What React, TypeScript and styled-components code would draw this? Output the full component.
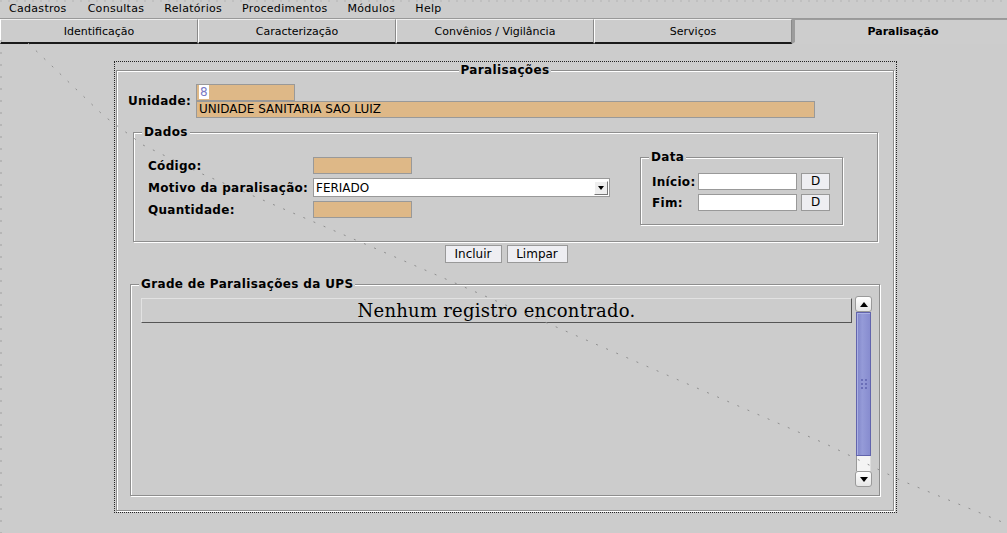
import React from "react";
import styled, { createGlobalStyle } from "styled-components";

const GlobalStyle = createGlobalStyle`
  body {
    margin: 0;
    background: #cccccc;
    font-family: "DejaVu Sans", "Liberation Sans", sans-serif;
    color: #000;
  }
  #root {
    position: relative;
    width: 1007px;
    height: 533px;
    overflow: hidden;
  }
`;

const menus = ["Cadastros", "Consultas", "Relatórios", "Procedimentos", "Módulos", "Help"];
const tabs = ["Identificação", "Caracterização", "Convênios / Vigilância", "Serviços", "Paralisação"];

const App = () => {
  return (
    <>
      <GlobalStyle />
      <MenuBar>
        {menus.map((m) => (
          <MenuItem key={m}>{m}</MenuItem>
        ))}
      </MenuBar>

      <TabBar>
        {tabs.map((t, i) => (
          <Tab key={t} $active={i === tabs.length - 1}>
            {t}
          </Tab>
        ))}
      </TabBar>

      <Panel>
        <Group>
          <Legend $center>Paralisações</Legend>
          <OuterBody>
            <UnidadeRow>
              <Label>Unidade:</Label>
              <FieldStack>
                <Field $w={99}>
                  <Selected>8</Selected>
                </Field>
                <Field $w={619}>UNIDADE SANITARIA SAO LUIZ</Field>
              </FieldStack>
            </UnidadeRow>

            <DadosGroup>
              <Legend>Dados</Legend>
              <DadosBody>
                <FormGrid>
                  <Label>Código:</Label>
                  <Field $w={99} />
                  <Label>Motivo da paralisação:</Label>
                  <Select>
                    <span>FERIADO</span>
                    <ArrowBox>
                      <Triangle />
                    </ArrowBox>
                  </Select>
                  <Label>Quantidade:</Label>
                  <Field $w={99} />
                </FormGrid>

                <DataGroup>
                  <Legend>Data</Legend>
                  <DataBody>
                    <Label>Início:</Label>
                    <Field $w={99} $white />
                    <SmallButton>D</SmallButton>
                    <Label>Fim:</Label>
                    <Field $w={99} $white />
                    <SmallButton>D</SmallButton>
                  </DataBody>
                </DataGroup>
              </DadosBody>
            </DadosGroup>

            <ButtonRow>
              <Button $w={57}>Incluir</Button>
              <Button $w={61}>Limpar</Button>
            </ButtonRow>

            <GradeGroup>
              <Legend>Grade de Paralisações da UPS</Legend>
              <GradeBody>
                <TableArea>
                  <EmptyHeader>Nenhum registro encontrado.</EmptyHeader>
                </TableArea>
                <ScrollBar>
                  <ScrollButton>
                    <Arrow viewBox="0 0 8 5">
                      <path d="M0 5 L4 0 L8 5 Z" />
                    </Arrow>
                  </ScrollButton>
                  <Thumb>
                    <Grip />
                  </Thumb>
                  <Track />
                  <ScrollButton>
                    <Arrow viewBox="0 0 8 5">
                      <path d="M0 0 L8 0 L4 5 Z" />
                    </Arrow>
                  </ScrollButton>
                </ScrollBar>
              </GradeBody>
            </GradeGroup>
          </OuterBody>
        </Group>
      </Panel>

      <Trail width="1007" height="533" viewBox="0 0 1007 533">
        <polyline
          points="28,43 104,116 143,145 200,173 372,247 600,346 826,444 900,480 1007,524"
          fill="none"
          stroke="#8f8f8f"
          strokeWidth="1"
          strokeDasharray="2 9"
        />
        <line x1="1" y1="40" x2="1" y2="533" stroke="#a0a0a0" strokeDasharray="2 10" />
        <line x1="0" y1="1" x2="1007" y2="1" stroke="#b4b4b4" strokeDasharray="2 6" />
      </Trail>
    </>
  );
};

export default App;

const MenuBar = styled.div`
  display: flex;
  height: 18px;
  border-bottom: 1px solid #999;
  font-size: 11px;
  line-height: 18px;
  letter-spacing: 0.3px;
`;

const MenuItem = styled.div`
  padding: 0 10px;
  &:first-child {
    padding-left: 9px;
    padding-right: 11px;
  }
`;

const TabBar = styled.div`
  display: grid;
  grid-template-columns: repeat(4, 198px) 1fr;
  height: 25px;
`;

const Tab = styled.div<{ $active?: boolean }>`
  box-sizing: border-box;
  display: flex;
  align-items: center;
  justify-content: center;
  font-size: 11px;
  font-weight: ${(p) => (p.$active ? "bold" : "normal")};
  background: ${(p) => (p.$active ? "#cdcdcd" : "#cccccc")};
  border-left: ${(p) => (p.$active ? "3px solid #9c9c9c" : "1px solid #fff")};
  border-right: ${(p) => (p.$active ? "none" : "1px solid #8a8a8a")};
  border-top: ${(p) => (p.$active ? "1px solid #9c9c9c" : "1px solid #eee")};
  border-bottom: ${(p) => (p.$active ? "2px solid transparent" : "2px solid #1a1a1a")};
  padding-left: ${(p) => (p.$active ? "4px" : "0")};
`;

const Panel = styled.div`
  box-sizing: border-box;
  width: 783px;
  height: 452px;
  margin: 17px 0 0 114px;
  border: 1px dotted #222;
  padding: 1px 2px 1px 1px;
`;

const Group = styled.fieldset`
  margin: 0;
  padding: 0;
  min-width: 0;
  border: 1px solid #8e8e8e;
  box-shadow: 1px 1px 0 #fff, inset 1px 1px 0 #fff;
`;

const Legend = styled.legend<{ $center?: boolean }>`
  font-size: 12px;
  font-weight: bold;
  line-height: 14px;
  letter-spacing: 0.35px;
  padding: 0 2px;
  background: #cccccc;
  margin-left: ${(p) => (p.$center ? "auto" : "8px")};
  margin-right: ${(p) => (p.$center ? "auto" : "0")};
`;

const OuterBody = styled.div`
  padding: 7px 15px 14px 11px;
`;

const UnidadeRow = styled.div`
  display: flex;
  align-items: center;
`;

const Label = styled.div`
  font-size: 12px;
  font-weight: bold;
  letter-spacing: 0.3px;
  white-space: nowrap;
`;

const FieldStack = styled.div`
  display: flex;
  flex-direction: column;
  margin-left: 5px;
`;

const Field = styled.div<{ $w: number; $white?: boolean }>`
  box-sizing: border-box;
  width: ${(p) => p.$w}px;
  height: 17px;
  background: ${(p) => (p.$white ? "#ffffff" : "#deb887")};
  border: 1px solid #999;
  font-size: 12px;
  line-height: 15px;
  padding-left: 2px;
  white-space: nowrap;
  overflow: hidden;
`;

const Selected = styled.span`
  background: #fff;
  color: #7878c4;
  padding: 0 1px;
`;

const DadosGroup = styled(Group)`
  margin: 7px 0 0 5px;
`;

const DadosBody = styled.div`
  display: flex;
  justify-content: space-between;
  align-items: flex-start;
  padding: 11px 34px 16px 14px;
`;

const FormGrid = styled.div`
  display: grid;
  grid-template-columns: 165px auto;
  row-gap: 4px;
  align-items: center;
  margin-top: 7px;
`;

const Select = styled.div`
  box-sizing: border-box;
  width: 297px;
  height: 19px;
  background: #fff;
  border: 1px solid #999;
  display: flex;
  align-items: center;
  justify-content: space-between;
  font-size: 12px;
  padding: 0 1px 0 2px;
`;

const ArrowBox = styled.div`
  box-sizing: border-box;
  width: 14px;
  height: 14px;
  background: #eeeeee;
  border: 1px solid #fff;
  border-right-color: #777;
  border-bottom-color: #777;
  display: flex;
  align-items: center;
  justify-content: center;
`;

const Triangle = styled.div`
  width: 0;
  height: 0;
  border-left: 3px solid transparent;
  border-right: 3px solid transparent;
  border-top: 4px solid #000;
`;

const DataGroup = styled(Group)`
  width: 203px;
  box-sizing: border-box;
`;

const DataBody = styled.div`
  display: grid;
  grid-template-columns: 42px 99px 29px;
  column-gap: 4px;
  row-gap: 4px;
  align-items: center;
  padding: 9px 12px 13px 11px;
`;

const SmallButton = styled.div`
  box-sizing: border-box;
  height: 17px;
  background: #eeeef2;
  border: 1px solid #999;
  font-size: 12px;
  line-height: 15px;
  text-align: center;
`;

const ButtonRow = styled.div`
  display: flex;
  justify-content: center;
  gap: 5px;
  margin: 3px 0 0 6px;
`;

const Button = styled.div<{ $w: number }>`
  box-sizing: border-box;
  width: ${(p) => p.$w}px;
  height: 18px;
  background: #eeeef2;
  border: 1px solid #999;
  font-size: 12px;
  line-height: 16px;
  text-align: center;
`;

const GradeGroup = styled(Group)`
  margin: 14px -2px 0 2px;
`;

const GradeBody = styled.div`
  display: flex;
  gap: 3px;
  padding: 5px 7px 8px 10px;
`;

const TableArea = styled.div`
  flex: 1;
  padding-top: 2px;
`;

const EmptyHeader = styled.div`
  box-sizing: border-box;
  height: 25px;
  border: 1px solid #e2e2e2;
  border-right-color: #555;
  border-bottom-color: #555;
  font-family: "DejaVu Serif", "Liberation Serif", serif;
  font-size: 18px;
  letter-spacing: 0.25px;
  line-height: 23px;
  text-align: center;
`;

const ScrollBar = styled.div`
  width: 17px;
  height: 191px;
  display: flex;
  flex-direction: column;
`;

const ScrollButton = styled.div`
  box-sizing: border-box;
  height: 16px;
  background: linear-gradient(#ffffff, #e6e6e6);
  border: 1px solid #9a9a9a;
  border-radius: 3px;
  display: flex;
  align-items: center;
  justify-content: center;
`;

const Arrow = styled.svg`
  width: 8px;
  height: 5px;
  fill: #000;
`;

const Thumb = styled.div`
  box-sizing: border-box;
  height: 144px;
  margin: 0 1px;
  background: linear-gradient(90deg, #7f84c8 0%, #959bd8 40%, #878ccf 100%);
  border: 1px solid #6264ac;
  box-shadow: inset 1px 1px 0 #aab0e4;
  display: flex;
  align-items: center;
  justify-content: center;
`;

const Grip = styled.div`
  width: 8px;
  height: 12px;
  background-image: radial-gradient(circle, #6a6eb8 1px, transparent 1.2px);
  background-size: 4px 4px;
`;

const Track = styled.div`
  box-sizing: border-box;
  height: 15px;
  margin: 0 1px;
  background: #f4f4f4;
  border-left: 1px solid #999;
  border-right: 1px solid #ddd;
`;

const Trail = styled.svg`
  position: absolute;
  left: 0;
  top: 0;
  pointer-events: none;
`;
